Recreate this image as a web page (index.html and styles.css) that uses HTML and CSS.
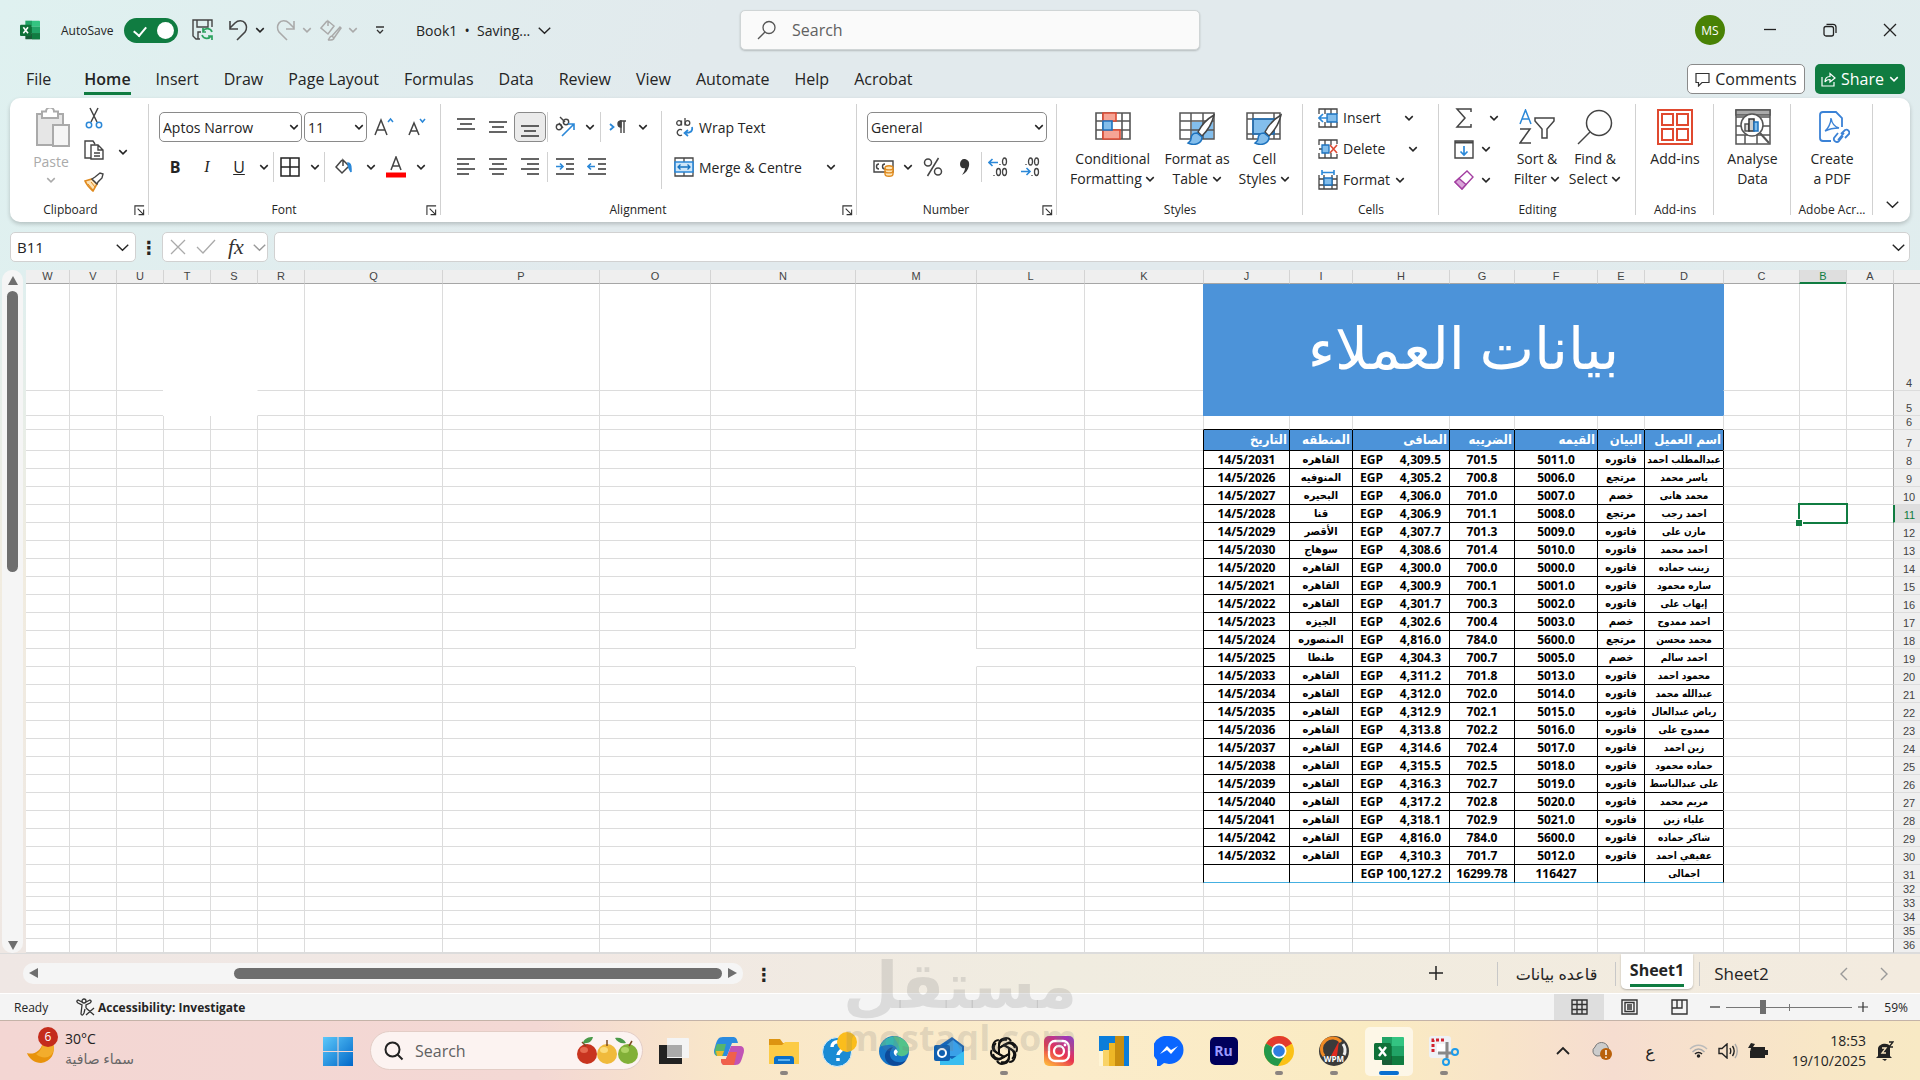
FILE: index.html
```html
<!DOCTYPE html>
<html lang="en">
<head>
    <meta charset="UTF-8">
    <meta name="viewport" content="width=device-width, initial-scale=1.0">
    <title>Book1 - Excel</title>
    <link rel="stylesheet" href="styles.css">
</head>
<body>
    <!-- Shared icons -->
    <svg class="sprite" aria-hidden="true">
        <symbol id="chev" viewBox="0 0 8 8"><path d="M1 2.500l3 3 3-3" fill="none" stroke="currentColor" stroke-width="1.200"/></symbol>
        <symbol id="chev-big" viewBox="0 0 12 12"><path d="M.7 3.500l5.300 5 5.300-5" fill="none" stroke="currentColor" stroke-width="1.300"/></symbol>
        <symbol id="launcher" viewBox="0 0 12 12"><path d="M1 11V1h10M4 4l6 6M10.500 5v5.500H5" fill="none" stroke="#333" stroke-width="1.200"/></symbol>
        <symbol id="excel" viewBox="0 0 30 30">
            <path d="M8 1h10v9H8z" fill="#21a366"/><path d="M18 1h11a1 1 0 0 1 1 1v8H18z" fill="#33c481"/>
            <path d="M8 10h10v10H8z" fill="#107c41"/><path d="M18 10h12v10H18z" fill="#21a366"/>
            <path d="M8 20h22v8a1 1 0 0 1-1 1H9a1 1 0 0 1-1-1z" fill="#185c37"/><path d="M18 20h12v8a1 1 0 0 1-1 1H18z" fill="#107c41"/>
            <rect x="0" y="7" width="17" height="17" rx="1.500" fill="#0f7038"/>
            <path d="M5 11l7 9M12 11l-7 9" stroke="#fff" stroke-width="2.400"/>
        </symbol>
        <symbol id="brush" viewBox="0 0 36 36">
            <path d="M34 4c-7 4-13 11-16 17l4 4c5-5 10-12 12-21z" fill="#fff" stroke="#444" stroke-width="1.500"/>
            <path d="M17 22c-4 0-6 2-6 6 0 2-2 3-3 4 6 3 14 1 14-6z" fill="#83beec" stroke="#1e73be" stroke-width="1.500"/>
        </symbol>
    </svg>

    <header class="titlebar">
        <div class="quick-access">
            <svg class="app-icon"><use href="#excel"/></svg>
            <label class="autosave-label" for="autosave">AutoSave</label>
            <input class="autosave" id="autosave" type="checkbox" checked>
            <button class="qa-btn" aria-label="Save">
                <svg width="22" height="22" viewBox="0 0 22 22" fill="none" stroke="#444" stroke-width="1.400"><path d="M8 20H4l-3-3V1h19v7M5 1v7h11V1M6 20v-7h3"/><path d="M20 13a5 5 0 0 0-9-1M11 9v4h3M10 16a5 5 0 0 0 9 1M20 21v-4h-4" stroke="#2ca25f" stroke-width="1.700"/></svg>
            </button>
            <button class="qa-btn" aria-label="Undo"><svg width="22" height="22" viewBox="0 0 22 22" fill="none" stroke="#444" stroke-width="1.600"><path d="M2 2v8h8M2 9l5-5c3-3 8-3 10 0s2 6 0 9l-8 8"/></svg></button>
            <svg class="chev"><use href="#chev"/></svg>
            <button class="qa-btn off" aria-label="Redo"><svg width="22" height="22" viewBox="0 0 22 22" fill="none" stroke="#aaa" stroke-width="1.600"><path d="M20 2v8h-8M20 9l-5-5c-3-3-8-3-10 0s-2 6 0 9l8 8"/></svg></button>
            <svg class="chev off"><use href="#chev"/></svg>
            <button class="qa-btn off" aria-label="Fill format"><svg width="22" height="22" viewBox="0 0 22 22" fill="none" stroke="#aaa" stroke-width="1.500"><path d="M7 2L1 9l7 6 6-8-6-5v5M20 8l-8 9 2 2 7-10zM12 17c-3 0-2 3-4 4 4 0 6 0 6-2"/></svg></button>
            <svg class="chev off"><use href="#chev"/></svg>
            <button class="qa-btn" aria-label="Customise"><svg width="10" height="12" viewBox="0 0 10 12" fill="none" stroke="#333" stroke-width="1.300"><path d="M1 3h8M2 6l3 3 3-3"/></svg></button>
        </div>
        <button class="doc-name">Book1 &nbsp;•&nbsp; Saving... <svg class="chev-big"><use href="#chev-big"/></svg></button>
        <label class="title-search">
            <svg width="20" height="20" viewBox="0 0 20 20" fill="none" stroke="#555" stroke-width="1.300"><circle cx="12" cy="7.500" r="6"/><path d="M8 12l-7 7"/></svg>
            <input type="search" placeholder="Search" aria-label="Search Excel">
        </label>
        <div class="window-controls">
            <button class="avatar">MS</button>
            <button class="win-btn" aria-label="Minimise"><svg width="14" height="14" viewBox="0 0 14 14" stroke="#222" stroke-width="1.300"><path d="M1 6.500h12"/></svg></button>
            <button class="win-btn" aria-label="Restore"><svg width="14" height="14" viewBox="0 0 14 14" fill="none" stroke="#222" stroke-width="1.300"><rect x="1" y="3.500" width="9.500" height="9.500" rx="2"/><path d="M3.500 1.300H10a3 3 0 0 1 3 3V10"/></svg></button>
            <button class="win-btn" aria-label="Close"><svg width="14" height="14" viewBox="0 0 14 14" stroke="#222" stroke-width="1.300"><path d="M1 1l12 12M13 1L1 13"/></svg></button>
        </div>
    </header>

    <nav class="tabs">
        <button class="tab first">File</button>
        <button class="tab active">Home</button>
        <button class="tab">Insert</button>
        <button class="tab">Draw</button>
        <button class="tab">Page Layout</button>
        <button class="tab">Formulas</button>
        <button class="tab">Data</button>
        <button class="tab">Review</button>
        <button class="tab">View</button>
        <button class="tab">Automate</button>
        <button class="tab">Help</button>
        <button class="tab">Acrobat</button>
        <button class="comments"><svg width="15" height="15" viewBox="0 0 15 15" fill="none" stroke="#333" stroke-width="1.200"><path d="M1 1.500h13v9H7L3.500 14v-3.500H1z"/></svg>Comments</button>
        <button class="share"><svg width="15" height="15" viewBox="0 0 15 15" fill="none" stroke="#fff" stroke-width="1.200"><path d="M1 5v9h12v-4M4 10c0-4 2-5.500 5-5.500V1.500L14 6l-5 4V7.500C7 7.500 5 8 4 10z"/></svg>Share<svg class="chev"><use href="#chev"/></svg></button>
    </nav>

    <section class="ribbon">
        <div class="group g-clipboard">
            <div class="group-body">
                <button class="paste">
                    <svg width="34" height="40" viewBox="0 0 34 40" fill="#e6e6e6" stroke="#aaa" stroke-width="2"><path d="M1 6h26v31H1z"/><path d="M6 3.500h4a4 4 0 0 1 8 0h4V10H6z" fill="#fff"/><path d="M17 17h16v21H17z" fill="#f5f5f5"/></svg>
                    <span>Paste</span>
                    <svg class="chev"><use href="#chev"/></svg>
                </button>
                <div class="stack">
                    <button class="mini" aria-label="Cut"><svg width="20" height="22" viewBox="0 0 20 22" fill="none" stroke="#444" stroke-width="1.500"><path d="M6 1l7 14M14 1L7 15"/><circle cx="5" cy="18" r="2.700" stroke="#2b88d8"/><circle cx="15" cy="18" r="2.700" stroke="#2b88d8"/></svg></button>
                    <button class="mini" aria-label="Copy"><svg width="20" height="20" viewBox="0 0 20 20" fill="none" stroke="#444" stroke-width="1.400"><path d="M7 18H1V1h8l2 3M7 5h7l5 5v9H7zM14 5v5h5M10 13h6M10 16h6"/></svg></button>
                    <button class="mini" aria-label="Format Painter"><svg width="20" height="20" viewBox="0 0 20 20"><path d="M1 9l7-2 5 5-4 7c-2-2-6-5-8-10z" fill="#fce3b8" stroke="#e08a1e" stroke-width="1.600"/><path d="M8 7l3-2 5-4 3 1-1 4-4 4-1 2z" fill="#fff" stroke="#444" stroke-width="1.400"/><path d="M4 12l5 6M7 10l4 5" stroke="#e08a1e"/></svg></button>
                </div>
                <svg class="chev"><use href="#chev"/></svg>
            </div>
            <div class="group-label">Clipboard<svg class="launcher"><use href="#launcher"/></svg></div>
        </div>

        <div class="group g-font">
            <div class="group-body rows">
                <div class="row">
                    <select class="combo font-name" aria-label="Font"><option>Aptos Narrow</option></select>
                    <select class="combo font-size" aria-label="Font size"><option>11</option></select>
                    <button class="cmd" aria-label="Increase font size"><svg width="20" height="20" viewBox="0 0 20 20" fill="none" stroke="#444" stroke-width="1.500"><path d="M1 18L7 3l6 15M3 13h8"/><path d="M14 5l2.500-3L19 5" stroke="#2b88d8"/></svg></button>
                    <button class="cmd" aria-label="Decrease font size"><svg width="20" height="20" viewBox="0 0 20 20" fill="none" stroke="#444" stroke-width="1.500"><path d="M3 18L8 6l5 12M5 14h6"/><path d="M14 2l2.500 3L19 2" stroke="#2b88d8"/></svg></button>
                </div>
                <div class="row">
                    <button class="cmd bold">B</button>
                    <button class="cmd italic">I</button>
                    <button class="cmd underline">U</button>
                    <svg class="chev"><use href="#chev"/></svg>
                    <span class="sep"></span>
                    <button class="cmd" aria-label="Borders"><svg width="20" height="20" viewBox="0 0 20 20" fill="none" stroke="#222" stroke-width="1.500"><path d="M1 1h18v18H1zM10 1v18M1 10h18"/></svg></button>
                    <svg class="chev"><use href="#chev"/></svg>
                    <span class="sep"></span>
                    <button class="cmd wide-cmd" aria-label="Fill colour"><svg width="18" height="20" viewBox="0 0 18 20" fill="none" stroke="#444" stroke-width="1.500"><path d="M7 3L1 10l6 6 7-7-6-6v6"/><path d="M13 6c3 0 3 3 3 6v3l-2-4z" fill="#2b88d8" stroke="#2b88d8"/></svg></button>
                    <svg class="chev"><use href="#chev"/></svg>
                    <button class="cmd" aria-label="Font colour"><svg width="20" height="22" viewBox="0 0 20 22" fill="none" stroke="#444" stroke-width="1.500"><path d="M5 14l5-13 5 13M7 10h6"/><path d="M0 19h20" stroke="#f00" stroke-width="5"/></svg></button>
                    <svg class="chev"><use href="#chev"/></svg>
                </div>
            </div>
            <div class="group-label">Font<svg class="launcher"><use href="#launcher"/></svg></div>
        </div>

        <div class="group g-align">
            <div class="group-body">
                <div class="rows">
                    <div class="row">
                        <button class="cmd" aria-label="Top align"><svg width="20" height="20" viewBox="0 0 20 20" stroke="#333" stroke-width="1.400"><path d="M1 2h18M4 7h12M1 12h18"/></svg></button>
                        <button class="cmd" aria-label="Middle align"><svg width="20" height="20" viewBox="0 0 20 20" stroke="#333" stroke-width="1.400"><path d="M1 5h18M4 10h12M1 15h18"/></svg></button>
                        <button class="cmd pressed" aria-label="Bottom align"><svg width="20" height="20" viewBox="0 0 20 20" stroke="#333" stroke-width="1.400"><path d="M1 9h18M4 14h12M1 19h18"/></svg></button>
                        <span class="sep"></span>
                        <button class="cmd" aria-label="Orientation"><svg width="22" height="22" viewBox="0 0 22 22" fill="none" stroke="#444" stroke-width="1.400"><circle cx="5" cy="11" r="2.700"/><path d="M5 7l4 5"/><circle cx="12" cy="6" r="2.700"/><path d="M6 1l5 5"/><path d="M8 20L20 8M14 8h6v6" stroke="#2b88d8" stroke-width="1.600"/></svg></button>
                        <svg class="chev"><use href="#chev"/></svg>
                        <span class="sep"></span>
                        <button class="cmd" aria-label="Text direction"><svg width="18" height="16" viewBox="0 0 18 16" fill="none" stroke="#444" stroke-width="1.400"><path d="M1 5l3.500 3L1 11" stroke="#2b88d8" stroke-width="1.800"/><path d="M12 14V2M15 14V2M17 2h-6"/><path d="M12 2a3 3 0 0 0 0 6z" fill="#444"/></svg></button>
                        <svg class="chev"><use href="#chev"/></svg>
                    </div>
                    <div class="row">
                        <button class="cmd" aria-label="Align left"><svg width="20" height="20" viewBox="0 0 20 20" stroke="#333" stroke-width="1.300"><path d="M1 2h18M1 7h12M1 12h18M1 17h12"/></svg></button>
                        <button class="cmd" aria-label="Centre"><svg width="20" height="20" viewBox="0 0 20 20" stroke="#333" stroke-width="1.300"><path d="M1 2h18M4 7h12M1 12h18M4 17h12"/></svg></button>
                        <button class="cmd" aria-label="Align right"><svg width="20" height="20" viewBox="0 0 20 20" stroke="#333" stroke-width="1.300"><path d="M1 2h18M7 7h12M1 12h18M7 17h12"/></svg></button>
                        <span class="sep"></span>
                        <button class="cmd" aria-label="Decrease indent"><svg width="20" height="20" viewBox="0 0 20 20" fill="none" stroke="#333" stroke-width="1.300"><path d="M1 2h18M11 7h8M11 12h8M1 17h18"/><path d="M1 9.500h7M5 6.500l3 3-3 3" stroke="#2b88d8" stroke-width="1.600"/></svg></button>
                        <button class="cmd" aria-label="Increase indent"><svg width="20" height="20" viewBox="0 0 20 20" fill="none" stroke="#333" stroke-width="1.300"><path d="M1 2h18M11 7h8M11 12h8M1 17h18"/><path d="M1 9.500h7M4 6.500l-3 3 3 3" stroke="#2b88d8" stroke-width="1.600"/></svg></button>
                    </div>
                </div>
                <span class="sep tall"></span>
                <div class="rows">
                    <button class="row text-cmd"><svg width="20" height="20" viewBox="0 0 20 20" fill="none" stroke="#444" stroke-width="1.300"><circle cx="5" cy="6" r="2.300"/><path d="M7.500 3.500v5M11 1v7.500"/><circle cx="13.500" cy="6" r="2.300"/><path d="M8 13a3 3 0 1 0 0 5"/><path d="M18 10c1 4-1 6-7 6M14 13l-3.500 3 3.500 3" stroke="#2b88d8" stroke-width="1.700"/></svg>Wrap Text</button>
                    <button class="row text-cmd"><svg width="20" height="20" viewBox="0 0 20 20" fill="none" stroke="#444" stroke-width="1.300"><path d="M1 1h18v18H1zM10 1v4M10 15v4"/><path d="M1 5h18v10H1z" fill="#cfe6f8" stroke="#2b88d8" stroke-width="1.600"/><path d="M4 10h12M6.500 7.500L4 10l2.500 2.500M13.500 7.500L16 10l-2.500 2.500" stroke="#1673c0"/></svg>Merge &amp; Centre<svg class="chev end"><use href="#chev"/></svg></button>
                </div>
            </div>
            <div class="group-label">Alignment<svg class="launcher"><use href="#launcher"/></svg></div>
        </div>

        <div class="group g-number">
            <div class="group-body rows">
                <select class="combo" aria-label="Number format"><option>General</option></select>
                <div class="row">
                    <button class="cmd" aria-label="Accounting format"><svg width="21" height="20" viewBox="0 0 21 20" fill="none" stroke="#444" stroke-width="1.400"><path d="M1 4h19v11H1zM6 7a2.500 2.500 0 1 0 0 5M12 7a2.500 2.500 0 1 0 0 5"/><path d="M12 11v6c0 3 8 3 8 0v-6c0-3-8-3-8 0z" fill="#fde6b8" stroke="#e08a1e"/><path d="M12 11c0 2.500 8 2.500 8 0M12 14c0 2.500 8 2.500 8 0" stroke="#e08a1e"/></svg></button>
                    <svg class="chev"><use href="#chev"/></svg>
                    <button class="cmd percent" aria-label="Percent style"><svg width="20" height="20" viewBox="0 0 20 20" fill="none" stroke="#444" stroke-width="1.500"><circle cx="5" cy="5.500" r="3.500"/><circle cx="15" cy="14.500" r="3.500"/><path d="M15.500 1l-11 18"/></svg></button>
                    <button class="cmd" aria-label="Comma style"><svg width="12" height="18" viewBox="0 0 12 18" fill="#333"><path d="M5 1c3 0 6 2 5 7-1 4-3 7-7 9 2-3 3-5 3-7-3 1-5-1-5-4s2-5 4-5z"/></svg></button>
                    <span class="sep"></span>
                    <button class="cmd" aria-label="Increase decimal"><svg width="20" height="20" viewBox="0 0 20 20" fill="none" stroke="#444" stroke-width="1.300"><ellipse cx="16.500" cy="4.500" rx="2" ry="3.500"/><ellipse cx="10.500" cy="15" rx="2" ry="3.500"/><ellipse cx="16.500" cy="15" rx="2" ry="3.500"/><path d="M6 18v1M12 7v1"/><path d="M1 5.500h9M4.500 2L1 5.500 4.500 9" stroke="#2b88d8" stroke-width="1.600"/></svg></button>
                    <button class="cmd" aria-label="Decrease decimal"><svg width="20" height="20" viewBox="0 0 20 20" fill="none" stroke="#444" stroke-width="1.300"><ellipse cx="10.500" cy="4.500" rx="2" ry="3.500"/><ellipse cx="16.500" cy="4.500" rx="2" ry="3.500"/><ellipse cx="16.500" cy="15" rx="2" ry="3.500"/><path d="M6 7v1M12 18v1"/><path d="M1 14.500h9M6.500 11l3.500 3.500L6.500 18" stroke="#2b88d8" stroke-width="1.600"/></svg></button>
                </div>
            </div>
            <div class="group-label">Number<svg class="launcher"><use href="#launcher"/></svg></div>
        </div>

        <div class="group g-styles">
            <div class="group-body">
                <button class="big"><svg width="36" height="36" viewBox="0 0 36 36" fill="none" stroke="#555" stroke-width="1.600"><path d="M1 4h34v26H1zM1 12h34M1 21h34M8 4v26M27 4v26"/><path d="M8 4h13v8H8zM8 21h17v9H8z" fill="#f6a495" stroke="#dd4b35"/><path d="M8 12h9v9H8z" fill="#83beec" stroke="#1e73be"/></svg><span>Conditional</span><span>Formatting <svg class="chev"><use href="#chev"/></svg></span></button>
                <button class="big"><svg width="36" height="36" viewBox="0 0 36 36"><path d="M13 13h21v17H13z" fill="#83beec"/><path d="M1 4h34v26H1zM1 12h34M1 21h34M12 4v26M24 4v26" fill="none" stroke="#555" stroke-width="1.500"/><use href="#brush" x="1" y="2" width="36" height="36"/></svg><span>Format as</span><span>Table <svg class="chev"><use href="#chev"/></svg></span></button>
                <button class="big"><svg width="36" height="36" viewBox="0 0 36 36"><path d="M7 10h22v15H7z" fill="#83beec"/><path d="M1 4h33v26H1zM1 10h33M1 25h33M7 4v26M28 4v26" fill="none" stroke="#555" stroke-width="1.500"/><path d="M7 10h21v15H7z" fill="none" stroke="#1e73be" stroke-width="1.500"/><use href="#brush" x="1" y="2" width="36" height="36"/></svg><span>Cell</span><span>Styles <svg class="chev"><use href="#chev"/></svg></span></button>
            </div>
            <div class="group-label">Styles</div>
        </div>

        <div class="group g-cells">
            <div class="group-body stack">
                <button class="text-cmd"><svg width="20" height="20" viewBox="0 0 20 20" fill="none" stroke="#444" stroke-width="1.300"><path d="M1 6V1h18v5M1 14v5h18v-5M7 1v5M13 1v5M7 14v5M13 14v5"/><path d="M9 6h10v8H9z" fill="#83beec" stroke="#1e73be"/><path d="M10 10H1M5 6l-4 4 4 4" stroke="#2b88d8" stroke-width="1.700"/></svg>Insert<svg class="chev"><use href="#chev"/></svg></button>
                <button class="text-cmd"><svg width="20" height="20" viewBox="0 0 20 20" fill="none" stroke="#444" stroke-width="1.300"><path d="M1 6V1h18v4M1 14v5h18v-4M7 1v5M13 1v5M7 14v5M13 14v5M1 10h4"/><path d="M4 6h7v8H4z" fill="#83beec" stroke="#1e73be"/><path d="M12 6l7 8M19 6l-7 8" stroke="#dd4b35" stroke-width="1.600"/></svg>Delete<svg class="chev"><use href="#chev"/></svg></button>
                <button class="text-cmd"><svg width="20" height="20" viewBox="0 0 20 20" fill="none" stroke="#444" stroke-width="1.300"><path d="M1 5v14h18V5M1 9h18M1 15h18M6 5v14M14 5v14"/><path d="M6 8h8v7H6z" fill="#83beec" stroke="#1e73be"/><path d="M4 2.500h12M4 0v5M16 0v5" stroke="#2b88d8" stroke-width="1.600"/></svg>Format<svg class="chev"><use href="#chev"/></svg></button>
            </div>
            <div class="group-label">Cells</div>
        </div>

        <div class="group g-editing">
            <div class="group-body">
                <div class="stack">
                    <button class="mini" aria-label="AutoSum"><svg width="20" height="20" viewBox="0 0 20 20" fill="none" stroke="#444" stroke-width="1.500"><path d="M17 4V1H3l8 9-8 9h14v-3"/></svg><svg class="chev wide"><use href="#chev"/></svg></button>
                    <button class="mini" aria-label="Fill"><svg width="20" height="20" viewBox="0 0 20 20" fill="none" stroke="#444" stroke-width="1.400"><path d="M1 2h18v17H1z"/><path d="M1 3.500h18" stroke-width="2"/><path d="M10 7v9M6.500 12.500L10 16l3.500-3.500" stroke="#2b88d8" stroke-width="1.700"/></svg><svg class="chev"><use href="#chev"/></svg></button>
                    <button class="mini" aria-label="Clear"><svg width="20" height="20" viewBox="0 0 20 20" fill="none" stroke="#a33ea1" stroke-width="1.400"><path d="M1 12L13 1l6 6L8 19z"/><path d="M1 12l4-3.500 7 6L8 19z" fill="#d9a4d8"/></svg><svg class="chev"><use href="#chev"/></svg></button>
                </div>
                <button class="big"><svg width="36" height="36" viewBox="0 0 36 36" fill="none" stroke="#444" stroke-width="1.500"><path d="M1 15L6.500 1 12 15M3 10h7" stroke="#2b88d8"/><path d="M1 20h10L1 34h11"/><path d="M16 9h19v3l-7 8v9h-5v-9l-7-8z"/></svg><span>Sort &amp;</span><span>Filter <svg class="chev"><use href="#chev"/></svg></span></button>
                <button class="big"><svg width="36" height="36" viewBox="0 0 36 36" fill="none" stroke="#444" stroke-width="1.500"><circle cx="22" cy="14" r="12.500"/><path d="M13 23L1 35"/></svg><span>Find &amp;</span><span>Select <svg class="chev"><use href="#chev"/></svg></span></button>
            </div>
            <div class="group-label">Editing</div>
        </div>

        <div class="group g-addins">
            <div class="group-body"><button class="big"><svg width="36" height="36" viewBox="0 0 36 36" fill="none" stroke="#e0492f" stroke-width="2"><path d="M1 1h34v34H1z"/><path d="M5 5h11v11H5zM20 5h11v11H20zM5 20h11v11H5zM20 20h11v11H20z"/></svg><span>Add-ins</span></button></div>
            <div class="group-label">Add-ins</div>
        </div>

        <div class="group g-analyse">
            <div class="group-body"><button class="big"><svg width="36" height="36" viewBox="0 0 36 36" fill="none" stroke="#555" stroke-width="1.500"><path d="M1 1h34v34H1zM1 8h34M1 17h34M1 26h34M10 26v9M22 26v9"/><path d="M1 1h34v5H1z" fill="#aaa"/><circle cx="17" cy="16" r="11" fill="#fff"/><path d="M25 24l9 10" stroke-width="2"/><path d="M10 15h4v7h-4z" fill="#ddd"/><path d="M14 10h5v12h-5z" fill="#ccc" stroke="#333"/><path d="M19 13h4v9h-4z" fill="#83beec" stroke="#1e73be"/></svg><span>Analyse</span><span>Data</span></button></div>
        </div>

        <div class="group g-adobe">
            <div class="group-body"><button class="big"><svg width="36" height="36" viewBox="0 0 36 36" fill="none" stroke="#3b82d6" stroke-width="1.800"><path d="M17 32H9a3 3 0 0 1-3-3V6a3 3 0 0 1 3-3h13l6 6v9"/><path d="M11 22c3-2 6-8 6-13 1 6 4 9 8 10-5 0-10 1-14 3z" stroke-width="1.400"/><path d="M27 25l4-4a3 3 0 0 1 4 4l-4 4M29 27l-4 5a3 3 0 0 1-5-3l4-5M24 31l6-7"/></svg><span>Create</span><span>a PDF</span></button></div>
            <div class="group-label">Adobe Acr...</div>
        </div>

        <button class="collapse" aria-label="Collapse ribbon"><svg class="chev-big"><use href="#chev-big"/></svg></button>
    </section>

    <section class="formula-bar">
        <label class="name-box"><input type="text" value="B11" aria-label="Name box"><svg class="chev-big"><use href="#chev-big"/></svg></label>
        <span class="dots">⋮</span>
        <div class="fx-box">
            <svg width="16" height="16" viewBox="0 0 16 16" stroke="#aaa" stroke-width="1.300"><path d="M1 1l14 14M15 1L1 15"/></svg>
            <svg width="20" height="16" viewBox="0 0 20 16" fill="none" stroke="#aaa" stroke-width="1.300"><path d="M1 8l6 6L19 1"/></svg>
            <span class="fx">fx</span>
            <svg class="chev-big"><use href="#chev-big"/></svg>
        </div>
        <label class="formula-input"><input type="text" aria-label="Formula"><svg class="chev-big"><use href="#chev-big"/></svg></label>
    </section>

    <main class="sheet">
        <div class="vscroll"><i class="arrow up"></i><i class="thumb"></i><i class="arrow down"></i></div>
        <table class="grid" id="grid" dir="rtl"></table>
    </main>

    <div class="sheet-bar">
        <div class="hscroll"><i class="arrow left"></i><i class="thumb"></i><i class="arrow right"></i></div>
        <span class="dots">⋮</span>
        <div class="sheet-tabs">
            <button class="add-sheet" aria-label="New sheet"><svg width="16" height="16" viewBox="0 0 16 16" stroke="#222" stroke-width="1.500"><path d="M8 1v14M1 8h14"/></svg></button>
            <button class="sheet-tab" lang="ar">قاعده بيانات</button>
            <button class="sheet-tab active"><span>Sheet1</span></button>
            <button class="sheet-tab">Sheet2</button>
            <button class="sheet-nav" aria-label="Previous sheet"><svg width="8" height="14" viewBox="0 0 8 14" fill="none" stroke="#999" stroke-width="1.400"><path d="M7 1L1 7l6 6"/></svg></button>
            <button class="sheet-nav" aria-label="Next sheet"><svg width="8" height="14" viewBox="0 0 8 14" fill="none" stroke="#999" stroke-width="1.400"><path d="M1 1l6 6-6 6"/></svg></button>
        </div>
    </div>

    <footer class="status">
        <span class="ready">Ready</span>
        <svg width="19" height="18" viewBox="0 0 19 18" fill="none" stroke="#333" stroke-width="1.300"><circle cx="8" cy="3" r="2"/><path d="M6 4L2 2C0 3 1 4 2 5l4 2-1 9c1 2 2 1 3-1l1-4M10 4l4-2c2 1 1 2 0 3l-4 2v3M10 10l8 7M18 10l-8 7"/></svg>
        <button class="access">Accessibility: Investigate</button>
        <div class="views">
            <button class="view on" aria-label="Normal"><svg width="17" height="16" viewBox="0 0 17 16" fill="none" stroke="#333" stroke-width="1.400"><path d="M1 1h15v14H1zM6 1v14M11 1v14M1 5.500h15M1 10.500h15"/></svg></button>
            <button class="view" aria-label="Page layout"><svg width="17" height="16" viewBox="0 0 17 16" fill="none" stroke="#333" stroke-width="1.400"><path d="M1 1h15v14H1zM4 3.500h9v9H4zM6 6h5M6 8h5M6 10h5"/></svg></button>
            <button class="view" aria-label="Page break preview"><svg width="17" height="16" viewBox="0 0 17 16" fill="none" stroke="#333" stroke-width="1.400"><path d="M1 1h15v14H1zM1 9h10V1M6 1v8"/></svg></button>
        </div>
        <button class="zoom-btn" aria-label="Zoom out"><svg width="10" height="10" viewBox="0 0 10 10" stroke="#333" stroke-width="1.200"><path d="M0 5h10"/></svg></button>
        <input class="zoom" type="range" min="0" max="100" value="28" aria-label="Zoom">
        <button class="zoom-btn" aria-label="Zoom in"><svg width="10" height="10" viewBox="0 0 10 10" stroke="#333" stroke-width="1.200"><path d="M0 5h10M5 0v10"/></svg></button>
        <span class="percent-label">59%</span>
    </footer>

    <div class="taskbar">
        <button class="weather">
            <svg width="32" height="36" viewBox="0 0 32 36"><path d="M0 24c6 2 14-1 16-11l10 1c3 10-2 19-12 20C8 34 2 30 0 24z" fill="#e8930c"/><path d="M16 13l10 1c2 7 0 12-5 14-4 1-9 0-12-3 4-2 6-6 7-12z" fill="#f3ad2c"/></svg>
            <span class="badge">6</span>
            <span class="weather-text"><b>30°C</b><span lang="ar">سماء صافية</span></span>
        </button>
        <button class="task" aria-label="Start"><svg width="30" height="30" viewBox="0 0 30 30"><defs><linearGradient id="win" x1="0" y1="0" x2="1" y2="1"><stop offset="0" stop-color="#5cc8fa"/><stop offset="1" stop-color="#0067c8"/></linearGradient></defs><path d="M0 1h14.500v14H0zM15.500 1H30v14H15.500zM0 16h14.500v14H0zM15.500 16H30v14H15.500z" fill="url(#win)"/></svg></button>
        <label class="task-search">
            <svg width="20" height="20" viewBox="0 0 20 20" fill="none" stroke="#222" stroke-width="2"><circle cx="8.500" cy="8.500" r="7"/><path d="M13.500 13.500l5 5"/></svg>
            <input type="search" placeholder="Search" aria-label="Search Windows">
            <svg width="62" height="28" viewBox="0 0 62 28">
                <circle cx="10" cy="17" r="10" fill="#c8341f"/><circle cx="30" cy="17" r="10" fill="#f0ba3c"/><circle cx="51" cy="17" r="10" fill="#82b038"/>
                <ellipse cx="7" cy="13" rx="4" ry="3" fill="#e56a4f"/><ellipse cx="27" cy="13" rx="4" ry="3" fill="#fbdc7c"/><ellipse cx="48" cy="13" rx="4" ry="3" fill="#aed364"/>
                <path d="M9 9L5 5M30 9V3M52 9l3-5" stroke="#7b4a22" stroke-width="1.500"/><path d="M6 6c1-5 6-6 10-6-1 4-4 7-10 6zM38 1c5-1 9 1 11 5-5 1-9-1-11-5z" fill="#4b9a4a"/>
            </svg>
        </label>
        <button class="task" aria-label="Task view"><svg width="30" height="30" viewBox="0 0 30 30"><path d="M0 9h23v19H0z" fill="#222"/><path d="M8 2h21a1 1 0 0 1 1 1v19H8z" fill="#f4f4f4"/><path d="M8 9h15v12H8z" fill="#aaa"/></svg></button>
        <button class="task" aria-label="Copilot"><svg width="30" height="30" viewBox="0 0 30 30"><path d="M9 1h10c3 0 4 2 5 6h-6L13 20H4c-4 0-5-4-3-9C3 4 4 1 9 1z" fill="#2a8be0"/><path d="M3 8h9l-3 12H4c-4 0-4-5-1-12z" fill="#57b56c"/><path d="M2 15h8l-2 5H3z" fill="#eab92d"/><path d="M21 29H11c-3 0-4-2-4-6h5l5-13h9c4 0 5 4 3 9-2 7-3 10-8 10z" fill="#c153b5"/><path d="M7 23h5l3-7h8l-3 13h-9c-3 0-4-2-4-6z" fill="#f0604a"/></svg></button>
        <button class="task open" aria-label="File Explorer"><svg width="30" height="30" viewBox="0 0 30 30"><path d="M0 3h11l3 4h15v9H0z" fill="#dd9411"/><path d="M0 9h13l3-3h14v22H0z" fill="#fccb45"/><path d="M5 28v-6a3 3 0 0 1 3-2h14a3 3 0 0 1 3 3v5z" fill="#0a6fc8"/><path d="M9 24h12" stroke="#5eb2ef" stroke-width="2"/></svg></button>
        <button class="task" aria-label="Get Help"><svg width="36" height="38" viewBox="0 0 36 38"><circle cx="16" cy="20" r="14.500" fill="#1a8bd4" stroke="#dbeefa"/><path d="M11 15c0-7 11-7 11 0 0 4-5 4-5 8M17 26v3" fill="none" stroke="#fff" stroke-width="3.500"/><circle cx="26" cy="10" r="10" fill="#fbbd1c"/></svg></button>
        <button class="task" aria-label="Edge"><svg width="30" height="30" viewBox="0 0 30 30"><circle cx="15" cy="15" r="15" fill="#1676c8"/><path d="M1 11C5-2 22-3 28 8c4 8-1 13-7 12-3-1-4-2-3-4 1-5-4-8-9-7-4 0-7 1-8 2z" fill="#39b5ae"/><path d="M14 0c9 0 18 8 16 15-1 5-9 7-12 3 6-4 0-12-4-18z" fill="#5cc97b" opacity=".7"/><path d="M14 11c-6 6-3 14 5 15 4 1 7-1 9-3-4 8-15 9-20 3-5-7 0-14 6-15z" fill="#0c4a9a"/><path d="M17 13c-4 2-2 7 1 7-1-1-1-3 1-4z" fill="#fff"/></svg></button>
        <button class="task" aria-label="Outlook"><svg width="30" height="30" viewBox="0 0 30 30"><path d="M6 9L18 1l12 9v18a1 1 0 0 1-1 1H7a1 1 0 0 1-1-1z" fill="#1465b8"/><path d="M9 12l10-8 9 7v9H9z" fill="#3aa0e8"/><path d="M6 17l12 6 12-8v13a1 1 0 0 1-1 1H7a1 1 0 0 1-1-1z" fill="#39bdf0"/><rect x="0" y="9" width="16" height="16" rx="2" fill="#0f5fb0"/><circle cx="8" cy="17" r="4" fill="none" stroke="#fff" stroke-width="2"/></svg></button>
        <button class="task open" aria-label="ChatGPT"><svg width="30" height="30" viewBox="0 0 30 30" fill="none" stroke="#111" stroke-width="2"><g id="petal"><path d="M10 19V8c0-6 9-8 12-3M10 12l7-4c4-2 8 0 9 4"/></g><use href="#petal" transform="rotate(60 15 15)"/><use href="#petal" transform="rotate(120 15 15)"/><use href="#petal" transform="rotate(180 15 15)"/><use href="#petal" transform="rotate(240 15 15)"/><use href="#petal" transform="rotate(300 15 15)"/></svg></button>
        <button class="task" aria-label="Instagram"><svg width="30" height="30" viewBox="0 0 30 30"><defs><linearGradient id="ig" x1=".2" y1="1" x2=".8" y2="0"><stop offset="0" stop-color="#fdb13c"/><stop offset=".45" stop-color="#e8344f"/><stop offset="1" stop-color="#9a37c4"/></linearGradient></defs><rect width="30" height="30" rx="5" fill="url(#ig)"/><rect x="5" y="5" width="20" height="20" rx="6" fill="none" stroke="#fff" stroke-width="2.300"/><circle cx="15" cy="15" r="5" fill="none" stroke="#fff" stroke-width="2.300"/><circle cx="21" cy="9" r="1.400" fill="#fff"/></svg></button>
        <button class="task" aria-label="Power BI"><svg width="30" height="30" viewBox="0 0 30 30"><path d="M0 0h30v30H0z" fill="#0b7dda"/><path d="M0 15h11v15H0z" fill="#fff5d5"/><path d="M4 14h9v16H4z" fill="#f9d367"/><path d="M10 7h9v23h-9z" fill="#eeb727"/><path d="M16 0h9v30h-9z" fill="#c98e10"/></svg></button>
        <button class="task" aria-label="Messenger"><svg width="30" height="30" viewBox="0 0 30 30"><path d="M15 0a14.500 14 0 0 1 0 28l-5-1-4 3H3v-6A14 14 0 0 1 15 0z" fill="#0a66ff"/><path d="M6 18l7-8 4 4 7-4-7 8-4-4z" fill="#fff"/></svg></button>
        <button class="task" aria-label="Premiere Rush"><span class="rush">Ru</span></button>
        <button class="task open" aria-label="Chrome"><svg width="30" height="30" viewBox="0 0 30 30"><circle cx="15" cy="15" r="15" fill="#fbc116"/><path d="M15 15L2 7.500A15 15 0 0 1 28 7.500z" fill="#e33b2e"/><path d="M15 15L2 7.500A15 15 0 0 0 14 30l7-11z" fill="#23984a"/><circle cx="15" cy="15" r="7.500" fill="#fff"/><circle cx="15" cy="15" r="5.800" fill="#2f7de1"/></svg></button>
        <button class="task open" aria-label="WPM"><svg width="30" height="30" viewBox="0 0 30 30"><circle cx="15" cy="15" r="15" fill="#3a3a3a"/><path d="M5 20A11 11 0 0 1 22 6" fill="none" stroke="#f08a24" stroke-width="3"/><path d="M24 8a11 11 0 0 1 1 11" fill="none" stroke="#eee" stroke-width="3"/><path d="M12 20L20 5l-2 15z" fill="#e02b20"/><text x="15" y="26" class="wpm">WPM</text></svg></button>
        <button class="task open current" aria-label="Excel"><svg width="30" height="30"><use href="#excel"/></svg></button>
        <button class="task open" aria-label="Snipping Tool"><svg width="30" height="30" viewBox="0 0 30 30"><rect width="22" height="22" rx="3" fill="#eef1f5"/><path d="M4 16V4h13" fill="none" stroke="#d2222d" stroke-width="3" stroke-dasharray="3 2"/><path d="M8 8h8v8H8z" fill="#fff"/><path d="M18 6v16M9 17h14" stroke="#888" stroke-width="3"/><circle cx="26" cy="16" r="3" fill="none" stroke="#1d9bea" stroke-width="2"/><circle cx="17" cy="26" r="3" fill="none" stroke="#1d9bea" stroke-width="2"/></svg></button>
        <div class="tray">
            <svg width="14" height="10" viewBox="0 0 14 10" fill="none" stroke="#222" stroke-width="1.800"><path d="M1 8l6-6 6 6"/></svg>
            <svg width="22" height="20" viewBox="0 0 22 20"><path d="M6 15a5 5 0 0 1-2-9c2-6 11-6 13 0l2 8z" fill="#ccc" stroke="#777"/><circle cx="15" cy="13" r="6" fill="#b9610c"/><path d="M15 9v5M15 15.500v1.500" stroke="#fff" stroke-width="1.500"/></svg>
            <span class="lang" lang="ar">ع</span>
            <div class="net">
                <svg width="19" height="14" viewBox="0 0 19 14" fill="none" stroke="#222" stroke-width="1.500"><path d="M1 5c5-5 12-5 17 0" stroke="#bbb"/><path d="M3.500 8c4-4 8-4 12 0" stroke="#aaa"/><path d="M6 10c2-2 5-2 7 0"/><circle cx="9.500" cy="12" r="1" fill="#222"/></svg>
                <svg width="20" height="16" viewBox="0 0 20 16" fill="none" stroke="#222" stroke-width="1.400"><path d="M1 5.500h3L9 1v14l-5-4.500H1zM12 5c1 2 1 4 0 6M14.500 3c2 3 2 7 0 10"/><path d="M17 1c3 4 3 10 0 14" stroke="#aaa"/></svg>
                <svg width="20" height="16" viewBox="0 0 20 16"><path d="M4 5h12v9H3V8" fill="#222" stroke="#222" stroke-width="2"/><path d="M17 7h3v5h-3zM3 0l4 1-2 3h3L2 9l1-4H0z" fill="#222"/></svg>
            </div>
            <div class="clock"><span>18:53</span><span>19/10/2025</span></div>
            <svg width="18" height="20" viewBox="0 0 18 20"><path d="M2 15V8c0-5 9-7 12-3v10l2 2H0zM6 18h5l-2 2z" fill="#222"/><path d="M6 7h4l-4 5h4" fill="none" stroke="#f9e6c2" stroke-width="1.300"/><path d="M13 1h4l-4 5h4" fill="none" stroke="#222" stroke-width="1.400"/></svg>
        </div>
    </div>

    <div class="watermark"><span lang="ar">مستقل</span><span class="domain">mostaql.com</span></div>

    <script src="script.js"></script>
</body>
</html>
```
FILE: styles.css
```css
* {
    box-sizing: border-box;
}
body {
    margin: 0;
    min-height: 100vh;
    display: flex;
    flex-direction: column;
    font-family: "Open Sans", "DejaVu Sans", sans-serif;
    font-size: 14px;
    color: #242424;
    background: linear-gradient(115deg, #dff1f0 0%, #e2eaed 30%, #e2eaed 60%, #dfefef 100%);
}
button, input, select {
    font: inherit;
    color: inherit;
    border: none;
    background: none;
    padding: 0;
    margin: 0;
    outline: none;
}
button {
    display: flex;
    align-items: center;
    justify-content: center;
    white-space: nowrap;
}
svg {
    flex: none;
}
.sprite {
    position: absolute;
    width: 0;
    height: 0;
}
.chev {
    width: 10px;
    height: 10px;
}
.chev-big {
    width: 13px;
    height: 13px;
}
.chev.off {
    color: #aaa;
}

/* Title bar */
.titlebar {
    height: 60px;
    display: flex;
    align-items: center;
    position: relative;
}
.quick-access {
    display: flex;
    align-items: center;
    padding-left: 20px;
}
.app-icon {
    width: 20px;
    height: 20px;
}
.autosave-label {
    font-size: 12px;
    width: 54px;
    margin-left: 21px;
}
.autosave {
    appearance: none;
    width: 54px;
    height: 25px;
    margin: 0 14px 0 9px;
    border-radius: 13px;
    background: #107c41;
    position: relative;
}
.autosave::before {
    content: "";
    position: absolute;
    left: 12px;
    top: 6px;
    width: 6px;
    height: 10px;
    border: solid #fff;
    border-width: 0 2px 2px 0;
    transform: rotate(40deg);
}
.autosave::after {
    content: "";
    position: absolute;
    right: 4px;
    top: 4px;
    width: 17px;
    height: 17px;
    border-radius: 50%;
    background: #fff;
}
.qa-btn {
    min-width: 22px;
}
.qa-btn + .qa-btn {
    margin-left: 14px;
}
.qa-btn + .chev {
    margin: 0 9px 0 5px;
}
.qa-btn.off + .chev {
    margin: 0 8px 0 6px;
}
.chev.off + .qa-btn:last-child {
    margin-left: 3px;
}
.doc-name {
    margin-left: 25px;
    gap: 8px;
}
.title-search {
    position: absolute;
    left: 50%;
    top: 10px;
    width: 460px;
    margin-left: -220px;
    height: 40px;
    display: flex;
    align-items: center;
    gap: 15px;
    padding: 0 16px;
    background: #fafafa;
    border: 1px solid #d0d5d6;
    border-radius: 5px;
    box-shadow: 0 1px 2px rgba(0, 0, 0, 0.2);
    font-size: 16px;
}
.title-search input, .task-search input {
    flex: 1;
    min-width: 0;
}
input::placeholder {
    color: #616161;
    opacity: 1;
}
.window-controls {
    margin-left: auto;
    display: flex;
    align-items: center;
}
.avatar {
    width: 30px;
    height: 30px;
    margin-right: 15px;
    border-radius: 50%;
    background: #498205;
    color: #fff;
    font-size: 12px;
}
.win-btn {
    width: 60px;
    height: 40px;
}

/* Ribbon tabs */
.tabs {
    height: 38px;
    display: flex;
    align-items: flex-start;
    gap: 25px;
    padding: 0 15px 0 26px;
    font-size: 16px;
}
.tab {
    height: 35px;
    padding-top: 6px;
    border-bottom: 3px solid transparent;
}
.tab.first {
    margin-right: 8px;
}
.tab.active {
    font-weight: 600;
    border-bottom-color: #107c41;
}
.comments, .share {
    height: 30px;
    margin-top: 4px;
    border-radius: 5px;
    gap: 5px;
}
.comments {
    width: 118px;
    margin-left: auto;
    border: 1px solid #8a8a8a;
    background: #fff;
}
.share {
    width: 90px;
    margin-left: -15px;
    background: #107c41;
    color: #fff;
}

/* Ribbon */
.ribbon {
    display: flex;
    height: 124px;
    margin: 0 10px;
    background: #fff;
    border-radius: 10px;
    box-shadow: 0 2px 4px rgba(0, 0, 0, 0.2);
}
.group {
    flex: none;
    display: flex;
    flex-direction: column;
    padding: 4px 0;
    position: relative;
}
.group::after {
    content: "";
    position: absolute;
    right: 0;
    top: 6px;
    bottom: 7px;
    width: 1px;
    background: #d1d1d1;
}
.group-body {
    flex: 1;
    display: flex;
}
.group-label {
    height: 16px;
    line-height: 16px;
    font-size: 12px;
    text-align: center;
    position: relative;
}
.launcher {
    position: absolute;
    right: 4px;
    top: 3px;
    width: 11px;
    height: 11px;
}
.g-clipboard { width: 139px; }
.g-font { width: 292px; }
.g-align { width: 416px; }
.g-number { width: 200px; }
.g-styles { width: 246px; }
.g-cells { width: 136px; }
.g-editing { width: 197px; }
.g-addins { width: 78px; }
.g-analyse { width: 77px; }
.g-adobe { width: 82px; }
.g-clipboard .group-label { padding-right: 18px; }
.g-font .group-label, .g-align .group-label, .g-number .group-label { padding-right: 22px; }
.rows {
    display: flex;
    flex-direction: column;
    gap: 10px;
    padding-top: 10px;
}
.row {
    display: flex;
    align-items: center;
    height: 30px;
}
.stack {
    display: flex;
    flex-direction: column;
}
.mini {
    height: 32px;
    justify-content: flex-start;
    gap: 7px;
}
.mini .wide {
    margin-left: 8px;
}
.paste {
    flex-direction: column;
    justify-content: flex-start;
    width: 50px;
    margin-left: 16px;
    padding-top: 6px;
    color: #aaa;
    gap: 4px;
}
.paste > svg:first-child {
    margin-left: 4px;
}
.paste + .stack {
    margin-left: 8px;
}
.g-clipboard .stack + .chev {
    align-self: center;
    margin-left: 14px;
}
.g-font .group-body {
    padding-left: 10px;
}
.combo {
    appearance: none;
    width: 180px;
    height: 30px;
    padding-left: 3px;
    border: 1px solid #8a8a8a;
    border-radius: 5px;
    background: #fff url("data:image/svg+xml,%3Csvg xmlns='http://www.w3.org/2000/svg' viewBox='0 0 8 8'%3E%3Cpath d='M1 2.500l3 3 3-3' fill='none' stroke='%23222' stroke-width='1.200'/%3E%3C/svg%3E") no-repeat right 2px center / 10px;
}
.font-name {
    width: 143px;
}
.font-size {
    width: 63px;
    margin: 0 1px 0 2px;
}
.cmd {
    width: 32px;
    height: 30px;
    border-radius: 5px;
    font-size: 16px;
}
.cmd + .chev {
    width: 10px;
    margin: 0 4px;
}
.wide-cmd {
    width: 37px;
}
.bold { font-weight: 700; }
.italic { font-family: "Liberation Serif", serif; font-style: italic; }
.underline { text-decoration: underline; }
.pressed {
    border: 1px solid #8a8a8a;
    background: #ebebeb;
}
.sep {
    width: 1px;
    height: 30px;
    background: #d1d1d1;
}
.g-align .row .sep {
    margin: 0 1px;
}
.sep.tall {
    height: 78px;
    margin: 9px 12px 0 8px;
}
.g-align .group-body {
    padding-left: 9px;
}
.text-cmd {
    justify-content: flex-start;
    gap: 5px;
}
.text-cmd .end {
    margin-left: 19px;
}
.g-align .rows:first-child {
    width: 203px;
}
.g-number .group-body {
    padding-left: 10px;
}
.big {
    flex-direction: column;
    justify-content: flex-start;
    padding-top: 7px;
    line-height: 20px;
}
.big > svg {
    margin-bottom: 4px;
}
.g-styles .group-body {
    justify-content: space-between;
    padding: 0 13px;
}
.g-cells .group-body {
    padding-left: 15px;
}
.g-cells .text-cmd, .g-editing .mini {
    height: 31px;
    flex: none;
}
.g-cells .text-cmd:nth-child(-n+2) .chev {
    margin-left: 18px;
}
.g-editing .group-body {
    padding-left: 15px;
}
.g-editing .big {
    width: 58px;
}
.g-editing .stack {
    width: 54px;
}
.g-addins .group-body, .g-analyse .group-body, .g-adobe .group-body {
    justify-content: center;
}
.collapse {
    flex: 1;
    align-items: flex-end;
    padding: 0 0 11px 2px;
}

/* Formula bar */
.formula-bar {
    height: 48px;
    display: flex;
    align-items: center;
    padding: 2px 10px 0;
}
.name-box, .fx-box, .formula-input {
    height: 30px;
    display: flex;
    align-items: center;
    background: #fff;
    border: 1px solid #d1d1d1;
    border-radius: 5px;
    padding: 0 6px;
}
.name-box {
    width: 126px;
    font-size: 15px;
}
.name-box input {
    flex: 1;
    width: 60px;
}
.dots {
    width: 26px;
    text-align: center;
    font-size: 18px;
    font-weight: 700;
    line-height: 20px;
}
.fx-box {
    width: 106px;
    padding: 0 0 0 7px;
    gap: 10px;
    color: #999;
}
.fx-box .chev-big {
    margin-left: -5px;
}
.fx {
    width: 22px;
    padding-left: 2px;
    font: italic 22px "Liberation Serif", serif;
    color: #333;
}
.formula-input {
    flex: 1;
    margin-left: 6px;
    padding-right: 4px;
}
.formula-input input {
    flex: 1;
}

/* Sheet */
.sheet {
    flex: 1;
    display: flex;
    background: linear-gradient(#dfefef, #f1ece0 45%, #eee7e3);
}
.vscroll {
    width: 21px;
    margin: 0 3px 0 2px;
    padding: 6px 0 3px;
    display: flex;
    flex-direction: column;
    align-items: center;
    background: #f5f5f5;
    border-radius: 10px;
}
.vscroll .thumb {
    width: 11px;
    height: 281px;
    margin: 6px 0 auto;
    border-radius: 6px;
    background: #6e6e6e;
}
.arrow {
    border: 5px solid transparent;
}
.arrow.up { border-top: 0; border-bottom: 9px solid #6e6e6e; }
.arrow.down { border-bottom: 0; border-top: 9px solid #6e6e6e; }
.arrow.left { border-left: 0; border-right: 9px solid #6e6e6e; }
.arrow.right { border-right: 0; border-left: 9px solid #6e6e6e; }
.grid {
    flex: 1;
    width: 0;
    table-layout: fixed;
    border-collapse: separate;
    border-spacing: 0;
    background: #fff;
    font: 11px "Liberation Sans", "DejaVu Sans", sans-serif;
    line-height: 12px;
}
.grid th, .grid td {
    padding: 0;
    white-space: nowrap;
    text-align: center;
}
.grid th {
    background: #efefef;
    color: #444;
    font-weight: 400;
}
.grid thead th {
    height: 14px;
    padding-bottom: 1px;
    border-left: 1px solid #d4d4d4;
    border-bottom: 1px solid #a6a6a6;
}
.grid tbody th {
    padding: 0 0 1px 4px;
    vertical-align: bottom;
    border-left: 1px solid #a6a6a6;
    border-bottom: 1px solid #dcdcdc;
}
.grid thead th.sel {
    padding: 0;
    background: #dedede;
    color: #107c41;
    border-bottom: 2px solid #107c41;
}
.grid tbody th.sel {
    background: #dedede;
    color: #107c41;
    border-left: 2px solid #107c41;
}
.grid td {
    border-left: 1px solid #dcdcdc;
    border-bottom: 1px solid #dcdcdc;
    font-family: "Open Sans", "DejaVu Sans", sans-serif;
    font-size: 12px;
    font-weight: 700;
    color: #000;
}
.grid td:last-child, .grid thead th:last-child {
    border-left: 0;
}
.grid td.blank {
    border-color: #fff;
}
.grid td.blank-left { border-left-color: #fff; }
.grid td.blank-bottom { border-bottom-color: #fff; }
.grid td.banner {
    background: #4c93d9;
    border-color: #4c93d9;
    color: #fff;
    font-family: "Liberation Serif", "DejaVu Sans", serif;
    font-size: 58px;
    font-weight: 400;
    line-height: 60px;
}
.grid td.banner-edge { border-left-color: #4c93d9; }
.grid td.edge { border-left-color: #000; }
.grid td.top { border-bottom-color: #000; }
.grid td.data {
    border-color: #000;
}
.grid td.ar {
    font-family: "DejaVu Sans Condensed", "DejaVu Sans", sans-serif;
    font-size: 11px;
}
.grid td.name {
    font-size: 10px;
}
.grid td.head {
    background: #4c93d9;
    color: #fff;
    text-align: right;
    padding-right: 2px;
    font-family: "DejaVu Sans Condensed", "DejaVu Sans", sans-serif;
    font-size: 13px;
}
.grid td.total {
    border-bottom-color: #45b0e1;
}
.money {
    display: flex;
    justify-content: space-between;
    padding: 0 8px 0 7px;
}
.money.tight {
    justify-content: center;
    gap: 3px;
    padding: 0;
}
.grid td.active-cell {
    position: relative;
}
.active-cell::before {
    content: "";
    position: absolute;
    inset: -2px;
    border: 2px solid #107c41;
}
.active-cell::after {
    content: "";
    position: absolute;
    left: -4px;
    bottom: -4px;
    width: 6px;
    height: 6px;
    background: #107c41;
    border: solid #fff;
    border-width: 1px 1px 0 0;
}

/* Sheet tabs */
.sheet-bar {
    height: 40px;
    display: flex;
    align-items: center;
    border-top: 1px solid #dcdcdc;
    background: linear-gradient(90deg, #efe7e4, #f1e8e4 30%, #f0ece0 55%, #f3ebdf);
}
.hscroll {
    width: 720px;
    height: 21px;
    margin: 0 0 1px 23px;
    padding: 0 6px;
    display: flex;
    align-items: center;
    background: #f5f5f5;
    border-radius: 10px;
}
.hscroll .thumb {
    width: 488px;
    height: 11px;
    margin: 0 6px 0 auto;
    border-radius: 6px;
    background: #6e6e6e;
}
.sheet-bar .dots {
    width: 42px;
}
.sheet-tabs {
    margin-left: auto;
    height: 100%;
    display: flex;
    font-size: 17px;
}
.add-sheet {
    width: 122px;
    padding-bottom: 2px;
}
.sheet-tab {
    width: 119px;
    position: relative;
}
.sheet-tab[lang="ar"] {
    font-size: 16px;
}
.sheet-tab.active {
    width: 72px;
    height: 35px;
    margin: 0 6px 0 5px;
    background: #fff;
    border-radius: 0 0 5px 5px;
    box-shadow: 0 1px 2px rgba(0, 0, 0, 0.25);
    font-size: 16px;
    font-weight: 700;
}
.sheet-tab.active span {
    border-bottom: 3px solid #107c41;
    line-height: 28px;
}
.sheet-tab.active + .sheet-tab {
    width: 85px;
}
.sheet-tab:not(.active)::before, .sheet-tab[lang="ar"]::after {
    content: "";
    position: absolute;
    left: 0;
    top: 8px;
    bottom: 7px;
    width: 1px;
    background: #c8c8c8;
}
.sheet-tab[lang="ar"]::after {
    left: auto;
    right: 0;
}
.sheet-nav {
    width: 40px;
}
.sheet-tab + .sheet-nav {
    margin-left: 40px;
}
.sheet-nav:last-child {
    margin-right: 16px;
}

/* Status bar */
.status {
    height: 27px;
    display: flex;
    align-items: center;
    padding: 0 12px 0 14px;
    background: #f4f4f4;
    border-top: 1px solid #fff;
    font-size: 12px;
}
.ready {
    width: 62px;
}
.access {
    margin-left: 3px;
    font-weight: 700;
}
.views {
    display: flex;
    height: 100%;
    margin-left: auto;
}
.view {
    width: 50px;
}
.view.on {
    background: #dedede;
}
.zoom-btn {
    width: 22px;
}
.zoom {
    appearance: none;
    width: 126px;
    height: 14px;
    background: linear-gradient(#777, #777) center / 1px 7px no-repeat, linear-gradient(#777, #777) center / 100% 1px no-repeat;
}
.zoom::-webkit-slider-thumb {
    appearance: none;
    width: 6px;
    height: 14px;
    background: #6e6e6e;
}
.percent-label {
    width: 34px;
    text-align: right;
}

/* Taskbar */
.taskbar {
    height: 60px;
    display: flex;
    align-items: center;
    border-top: 1px solid #c4b3a8;
    background: linear-gradient(90deg, #f3d6d3 0%, #f3d8d4 28%, #f9e7c8 38%, #fbeccb 55%, #faebc2 72%, #f6ddd0 84%, #f8e7c6 95%, #f8e9c4 100%);
}
.weather {
    width: 310px;
    height: 60px;
    padding-left: 27px;
    justify-content: flex-start;
    align-items: flex-start;
    position: relative;
}
.weather > svg {
    margin-top: 8px;
}
.badge {
    position: absolute;
    left: 38px;
    top: 6px;
    width: 20px;
    height: 20px;
    border-radius: 50%;
    background: #c42b1c;
    color: #fff;
    font-size: 12px;
    line-height: 20px;
}
.weather-text {
    display: flex;
    flex-direction: column;
    align-items: flex-start;
    margin: 8px 0 0 6px;
    line-height: 20px;
    color: #666;
}
.weather-text b {
    font-weight: 400;
    color: #222;
}
.task {
    width: 55px;
    height: 58px;
    position: relative;
}
.task.open::after {
    content: "";
    position: absolute;
    bottom: 5px;
    width: 8px;
    height: 4px;
    border-radius: 2px;
    background: #8b8480;
}
.task.current::before {
    content: "";
    position: absolute;
    inset: 5px 3px 4px 4px;
    border-radius: 5px;
    background: rgba(255, 255, 255, 0.6);
}
.task.current svg {
    position: relative;
}
.task.current::after {
    width: 20px;
    background: #0a6fd0;
}
.task-search {
    width: 273px;
    height: 39px;
    margin: 0 3px 0 5px;
    padding: 0 3px 0 13px;
    display: flex;
    align-items: center;
    gap: 11px;
    border: 1px solid #e3cdc6;
    border-radius: 20px;
    background: #fcf3f1;
    font-size: 16px;
}
.rush {
    width: 28px;
    height: 28px;
    border-radius: 5px;
    background: #00005b;
    color: #9a9aff;
    font-weight: 700;
    line-height: 27px;
}
.wpm {
    font: 700 8px "Open Sans", sans-serif;
    fill: #fff;
    text-anchor: middle;
}
.tray {
    margin-left: auto;
    padding-right: 26px;
    display: flex;
    align-items: center;
}
.lang {
    width: 20px;
    margin: 0 29px 0 27px;
    text-align: center;
    font-size: 16px;
}
.tray > svg:first-child {
    margin-right: 21px;
}
.net {
    display: flex;
    align-items: center;
    gap: 10px;
}
.clock {
    display: flex;
    flex-direction: column;
    align-items: flex-end;
    width: 98px;
    margin-right: 10px;
    line-height: 20px;
}

/* Site watermark laid over the lower bars */
.watermark {
    position: absolute;
    left: 845px;
    bottom: 22px;
    width: 230px;
    display: flex;
    flex-direction: column;
    align-items: center;
    color: rgba(120, 120, 120, 0.2);
    font-weight: 700;
    pointer-events: none;
}
.watermark [lang="ar"] {
    font: 700 64px "DejaVu Sans", sans-serif;
    line-height: 64px;
}
.domain {
    font-size: 36px;
    line-height: 40px;
}
```
FILE: script.js
```js
const grid = document.getElementById('grid');

// Column letter and width, first column is the one nearest the row numbers
const columns = [
    ['A', 47], ['B', 47], ['C', 76], ['D', 79], ['E', 47], ['F', 83], ['G', 65], ['H', 97],
    ['I', 63], ['J', 86], ['K', 119], ['L', 108], ['M', 121], ['N', 145], ['O', 111], ['P', 157],
    ['Q', 138], ['R', 47], ['S', 47], ['T', 47], ['U', 47], ['V', 47], ['W', null]
];

const headings = ['اسم العميل', 'البيان', 'القيمه', 'الضريبه', 'الصافى', 'المنطقه', 'التاريخ'];

const customers = [
    ['عبدالمطلب احمد', 'فاتوره', '5011.0', '701.5', '4,309.5', 'القاهره', '14/5/2031'],
    ['ياسر محمد', 'مرتجع', '5006.0', '700.8', '4,305.2', 'المنوفيه', '14/5/2026'],
    ['محمد هانى', 'خصم', '5007.0', '701.0', '4,306.0', 'البحيره', '14/5/2027'],
    ['احمد رجب', 'مرتجع', '5008.0', '701.1', '4,306.9', 'قنا', '14/5/2028'],
    ['مازن على', 'فاتوره', '5009.0', '701.3', '4,307.7', 'الأقصر', '14/5/2029'],
    ['احمد محمد', 'فاتوره', '5010.0', '701.4', '4,308.6', 'سوهاج', '14/5/2030'],
    ['زينب حماده', 'فاتوره', '5000.0', '700.0', '4,300.0', 'القاهره', '14/5/2020'],
    ['ساره محمود', 'فاتوره', '5001.0', '700.1', '4,300.9', 'القاهره', '14/5/2021'],
    ['إيهاب على', 'فاتوره', '5002.0', '700.3', '4,301.7', 'القاهره', '14/5/2022'],
    ['احمد ممدوح', 'خصم', '5003.0', '700.4', '4,302.6', 'الجيزه', '14/5/2023'],
    ['محمد محسن', 'مرتجع', '5600.0', '784.0', '4,816.0', 'المنصوره', '14/5/2024'],
    ['احمد سالم', 'خصم', '5005.0', '700.7', '4,304.3', 'طنطا', '14/5/2025'],
    ['محمود احمد', 'فاتوره', '5013.0', '701.8', '4,311.2', 'القاهره', '14/5/2033'],
    ['عبدالله  محمد', 'فاتوره', '5014.0', '702.0', '4,312.0', 'القاهره', '14/5/2034'],
    ['رياض عبدالعال', 'فاتوره', '5015.0', '702.1', '4,312.9', 'القاهره', '14/5/2035'],
    ['ممدوح على', 'فاتوره', '5016.0', '702.2', '4,313.8', 'القاهره', '14/5/2036'],
    ['زين احمد', 'فاتوره', '5017.0', '702.4', '4,314.6', 'القاهره', '14/5/2037'],
    ['حماده محمود', 'فاتوره', '5018.0', '702.5', '4,315.5', 'القاهره', '14/5/2038'],
    ['على عبدالباسط', 'فاتوره', '5019.0', '702.7', '4,316.3', 'القاهره', '14/5/2039'],
    ['مريم محمد', 'فاتوره', '5020.0', '702.8', '4,317.2', 'القاهره', '14/5/2040'],
    ['علياء زين', 'فاتوره', '5021.0', '702.9', '4,318.1', 'القاهره', '14/5/2041'],
    ['شاكر حماده', 'فاتوره', '5600.0', '784.0', '4,816.0', 'القاهره', '14/5/2042'],
    ['عفيفي احمد', 'فاتوره', '5012.0', '701.7', '4,310.3', 'القاهره', '14/5/2032'],
    ['اجمالى', '', '116427', '16299.78', '100,127.2', '', '']
];

function rowHeight(row) {
    if (row === 4) return 107;
    if (row === 5) return 25;
    if (row === 7) return 21;
    if (row >= 8 && row <= 31) return 18;
    return 14;
}

// One cell of the customers table, col counts from D
function dataCell(row, col) {
    if (row === 7) return `<td class="data head">${headings[col]}</td>`;
    const text = customers[row - 8][col];
    const total = row === 31 ? ' total' : '';
    if (col === 4) {
        const tight = row === 31 ? ' tight' : '';
        return `<td class="data${total}"><div class="money${tight}" dir="ltr"><span>EGP</span><span>${text}</span></div></td>`;
    }
    let arabic = '';
    if (col === 0) arabic = ' ar name';
    if (col === 1 || col === 5) arabic = ' ar';
    return `<td class="data${arabic}${total}">${text}</td>`;
}

function cell(row, letter, index) {
    if (letter === 'D' && row === 4) return '<td class="banner" colspan="7" rowspan="2">بيانات العملاء</td>';
    if (letter === 'S' && row === 4) return '<td class="blank" colspan="2" rowspan="2"></td>';
    if (row <= 5 && 'DEFGHIJST'.includes(letter)) return '';
    if (row >= 7 && row <= 31 && index >= 3 && index <= 9) return dataCell(row, index - 3);

    let name = '';
    if (letter === 'C' && row <= 5) name = 'banner-edge';
    if (letter === 'C' && row >= 7 && row <= 31) name = 'edge';
    if (row === 6 && index >= 3 && index <= 9) name = 'top';
    if (letter === 'R' && row <= 5) name = 'blank-left';
    if (letter === 'M' && row === 18) name = 'blank-bottom';
    if (letter === 'M' && row === 19) name = 'blank';
    if (letter === 'L' && row === 19) name = 'blank-left';
    if (letter === 'B' && row === 11) name = 'active-cell';
    return `<td class="${name}"></td>`;
}

let html = '<colgroup><col style="width:27px">';
columns.forEach(([, width]) => {
    html += width ? `<col style="width:${width}px">` : '<col>';
});
html += '</colgroup><thead><tr><th></th>';
columns.forEach(([letter]) => {
    html += `<th${letter === 'B' ? ' class="sel"' : ''}>${letter}</th>`;
});
html += '</tr></thead><tbody>';
for (let row = 4; row <= 36; row++) {
    html += `<tr style="height:${rowHeight(row)}px"><th${row === 11 ? ' class="sel"' : ''}>${row}</th>`;
    columns.forEach(([letter], index) => {
        html += cell(row, letter, index);
    });
    html += '</tr>';
}
grid.innerHTML = html + '</tbody>';
```
